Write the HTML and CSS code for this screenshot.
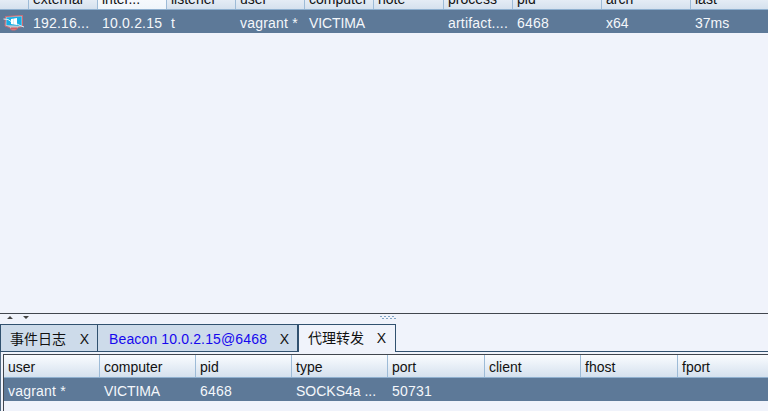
FILE: index.html
```
<!DOCTYPE html>
<html lang="zh-CN">
<head>
<meta charset="utf-8">
<title>Beacon</title>
<link rel="stylesheet" href="styles.css">
</head>
<body>
<section class="sessions">
  <div class="grid head">
    <span></span><span>external</span><span class="sorted">inter...</span><span>listener</span><span>user</span><span>computer</span><span>note</span><span>process</span><span>pid</span><span>arch</span><span>last</span>
  </div>
  <div class="grid row">
    <span class="host"><svg width="22" height="16" viewBox="0 0 22 16">
      <path d="M2.500 1.500L19.500 .500V11.500L15 12.500L12.500 15H8.500L6.500 12.500L2 11Z" fill="#b9c6d2" stroke="#cf6a72"/>
      <path d="M3.500 2.500L18.500 1.500V11L3.500 10Z" fill="#16aee5"/>
      <path d="M8 4L10.800 3.600V6.400H8ZM11 3.500L14 3V6.400H11ZM8 6.600H10.800V9.400L8 9ZM11 6.600H14V10L11 9.500Z" fill="#fff"/>
      <path d="M.500 4L5 4.500L8 6.500M14 9L17 10.500L21 12" fill="none" stroke="#d9edf5"/>
      <path d="M8 13.500H14" stroke="#d65c61" stroke-width="2"/>
    </svg></span><span class="wide">192.16...</span><span class="wide">10.0.2.15</span><span>t</span><span class="wide">vagrant *</span><span class="tight">VICTIMA</span><span></span><span class="wide">artifact....</span><span class="wide">6468</span><span>x64</span><span>37ms</span>
  </div>
</section>
<div class="divider">
  <svg class="arrows" width="26" height="5" viewBox="0 0 26 5"><path d="M0 4L3 1L6 4ZM16 1H22L19 4Z" fill="#444"/></svg>
  <svg class="grip" width="18" height="4" viewBox="0 0 18 4"><path d="M0 .5H16" stroke="#7fa3c4" stroke-dasharray="2 2"/><path d="M2 2.500H18" stroke="#7fa3c4" stroke-dasharray="2 2"/></svg>
</div>
<nav class="tabs">
  <div class="tab log"><span class="zh">事件日志</span><span class="close">X</span></div>
  <div class="tab beacon"><span class="name">Beacon 10.0.2.15@6468</span><span class="close">X</span></div>
  <div class="tab active"><span class="zh">代理转发</span><span class="close">X</span></div>
</nav>
<section class="panel">
  <div class="pivots">
    <div class="grid head"><span>user</span><span>computer</span><span>pid</span><span>type</span><span>port</span><span>client</span><span>fhost</span><span>fport</span></div>
    <div class="grid row"><span class="wide">vagrant *</span><span class="tight">VICTIMA</span><span class="wide">6468</span><span>SOCKS4a ...</span><span class="wide">50731</span><span></span><span></span><span></span></div>
  </div>
</section>
</body>
</html>
```
FILE: styles.css
```
* { box-sizing: border-box; }
body {
  margin: 0;
  width: 768px;
  height: 411px;
  overflow: hidden;
  display: flex;
  flex-direction: column;
  background: #f0f3fb;
  color: #111;
  font: 14px/22px "Liberation Sans", "Noto Sans CJK SC", sans-serif;
}
.grid { display: grid; white-space: nowrap; }
.grid span { overflow: hidden; padding-left: 4px; }
.head {
  height: 23px;
  background: linear-gradient(#fafcff, #d5e1ee);
  border-bottom: 1px solid #8fb0cf;
}
.head span { height: 22px; border-right: 1px solid #9dbbd7; line-height: 25px; }
.head span:last-child { border-right: 0; }
.row { height: 23px; background: #5d7998; color: #f4f7fb; line-height: 26px; }
.wide { letter-spacing: .2px; }
.tight { letter-spacing: -.1px; }
.sessions {
  flex: 0 0 313px;
  display: flex;
  flex-direction: column;
  justify-content: flex-start;
  overflow: hidden;
}
.sessions .grid {
  flex: none;
  grid-template-columns: 29px 69px 69px 69px 69px 69px 70px 69px 89px 89px 77px;
}
.sessions .head { margin-top: -13px; }
.sessions .head .sorted { background: linear-gradient(#fff, #eff5fb); }
.sessions .host { padding: 5px 0 0 3px; line-height: 0; }
.divider {
  flex: 0 0 11px;
  display: flex;
  border-top: 1px solid #41464e;
}
.divider svg { display: block; }
.arrows { margin: 1px 0 0 7px; }
.grip { margin: 2px 0 0 347px; }
.tabs {
  flex: 0 0 28px;
  min-height: 0;
  display: flex;
  border-bottom: 1px solid #31516f;
}
.tab {
  display: flex;
  height: 27px;
  justify-content: space-between;
  border: 1px solid #31516f;
  border-bottom: 0;
  background: #cddbea;
  line-height: 29px;
  white-space: nowrap;
}
.log { width: 98px; padding: 0 8px 0 9px; }
.beacon { width: 200px; padding: 0 8px 0 11px; border-left: 0; color: #1608ee; }
.name { letter-spacing: .14px; }
.active {
  width: 98px;
  height: 28px;
  margin-bottom: -1px;
  padding: 0 9px;
  background: #f0f3fb;
  line-height: 26px;
}
.close { color: #111; }
.panel {
  flex: 1;
  padding: 2px 0 0 2px;
  border-left: 1px solid #526b84;
}
.pivots { height: 100%; border: solid #41464e; border-width: 1px 0 0 1px; }
.pivots .grid { grid-template-columns: 96px 96px 96px 96px 97px 96px 97px 90px; }
```
